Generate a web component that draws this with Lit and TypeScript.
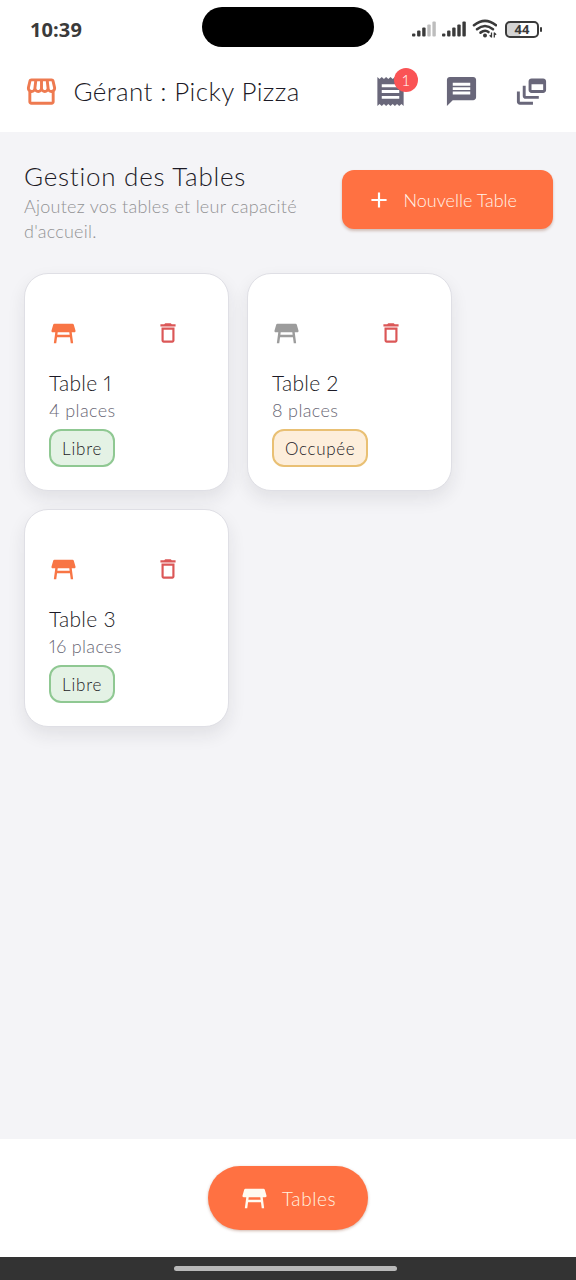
import { LitElement, html, css, svg } from "lit";
import { customElement, property } from "lit/decorators.js";
import { classMap } from "lit/directives/class-map.js";

const ICONS: Record<string, string> = {
  store:
    "M21.9 8.89l-1.05-4.37c-.22-.9-1-1.52-1.91-1.52H5.05c-.9 0-1.69.63-1.9 1.52L2.1 8.89c-.24 1.02-.02 2.06.62 2.88.08.11.19.19.28.29V19c0 1.1.9 2 2 2h14c1.1 0 2-.9 2-2v-6.94c.09-.09.2-.18.28-.28.64-.82.87-1.87.62-2.89zm-2.99-3.9l1.05 4.37c.1.42.01.84-.25 1.17-.14.18-.44.47-.94.47-.61 0-1.14-.49-1.21-1.14L16.98 5l1.93-.01zM13 5h1.96l.54 4.52c.05.39-.07.78-.33 1.07-.22.26-.54.41-.95.41-.67 0-1.22-.59-1.22-1.31V5zM8.49 9.52L9.04 5H11v4.69c0 .72-.55 1.31-1.29 1.31-.34 0-.65-.15-.89-.41-.25-.29-.37-.68-.33-1.07zm-4.45-.16L5.05 5h1.97l-.58 4.86c-.08.65-.6 1.14-1.21 1.14-.49 0-.8-.29-.93-.47-.27-.32-.36-.75-.26-1.17zM5 19v-6.03c.08.01.15.03.23.03.87 0 1.66-.36 2.24-.95.6.6 1.4.95 2.31.95.87 0 1.65-.36 2.23-.93.59.57 1.39.93 2.29.93.84 0 1.64-.35 2.24-.95.58.59 1.37.95 2.24.95.08 0 .15-.02.23-.03V19H5z",
  receipt:
    "M18 17H6v-2h12v2zm0-4H6v-2h12v2zm0-4H6V7h12v2zM3 22l1.5-1.5L6 22l1.5-1.5L9 22l1.5-1.5L12 22l1.5-1.5L15 22l1.5-1.5L18 22l1.5-1.5L21 22V2l-1.5 1.5L18 2l-1.5 1.5L15 2l-1.5 1.5L12 2l-1.5 1.5L9 2 7.5 3.5 6 2 4.5 3.5 3 2v20z",
  message:
    "M20 2H4c-1.1 0-1.99.9-1.99 2L2 22l4-4h14c1.1 0 2-.9 2-2V4c0-1.1-.9-2-2-2zm-2 12H6v-2h12v2zm0-3H6V9h12v2zm0-3H6V6h12v2z",
  feed:
    "M8 8H6v7c0 1.1.9 2 2 2h9v-2H8V8zM20 3h-8c-1.1 0-2 .9-2 2v6c0 1.1.9 2 2 2h8c1.1 0 2-.9 2-2V5c0-1.1-.9-2-2-2zm0 8h-8V7h8v4zM4 12H2v7c0 1.1.9 2 2 2h9v-2H4v-7z",
  trash:
    "M6 19c0 1.1.9 2 2 2h8c1.1 0 2-.9 2-2V7H6v12zM8 9h8v10H8V9zm7.5-5l-1-1h-5l-1 1H5v2h14V4z",
  table:
    "M21.96 9.73l-1.43-5c-.12-.43-.51-.73-.96-.73H4.43c-.45 0-.84.3-.96.73l-1.43 5c-.18.63.3 1.27.96 1.27h2.2L4 20h2l.67-5h10.67l.66 5h2l-1.2-9h2.19c.67 0 1.15-.64.97-1.27zM6.93 13l.27-2h9.6l.27 2H6.93z",
  add: "M19 13h-6v6h-2v-6H5v-2h6V5h2v6h6v2z",
};

interface DiningTable {
  name: string;
  seats: number;
  free: boolean;
}

@customElement("ui-icon")
class UiIcon extends LitElement {
  @property() name = "";
  static styles = css`
    :host {
      display: block;
      flex: none;
      width: 35px;
      height: 35px;
    }
    .glyph {
      display: block;
      width: 100%;
      height: 100%;
      fill: currentColor;
    }
  `;
  render() {
    return html`<svg class="glyph" viewBox="0 0 24 24"><path d=${ICONS[this.name]}></path></svg>`;
  }
}

@customElement("status-bar")
class StatusBar extends LitElement {
  static styles = css`
    :host {
      display: grid;
      grid-template-columns: 1fr 172px 1fr;
      align-items: center;
      height: 53px;
      color: #3a3a3a;
    }
    .time {
      padding: 6px 0 0 30px;
      font: 700 20px/24px "Open Sans", sans-serif;
      letter-spacing: 0.1px;
    }
    .island {
      height: 40px;
      border-radius: 20px;
      background: #000;
    }
    .system {
      display: flex;
      align-items: center;
      padding: 5px 0 0 38px;
    }
    .signals {
      display: block;
      flex: none;
    }
    .battery {
      display: flex;
      align-items: center;
      margin-left: 8px;
    }
    .cell {
      box-sizing: border-box;
      width: 34px;
      height: 17px;
      border: 2px solid #3a3a3a;
      border-radius: 5px;
      background: linear-gradient(90deg, #d4d4d4 44%, #fff 44%);
      font: 700 13px/13px "Open Sans", sans-serif;
      text-align: center;
    }
    .tip {
      width: 2px;
      height: 5px;
      margin-left: 1px;
      border-radius: 1px;
      background: #3a3a3a;
    }
  `;
  bars(x: number, lit: number) {
    return [3, 6, 9, 12, 15].map(
      (h, i) => svg`<rect x=${x + i * 5.1} y=${17.5 - h} width="3.4" height=${h} rx="1" fill=${i < lit ? "#3a3a3a" : "#bdbdbd"}></rect>`,
    );
  }
  render() {
    return html`
      <div class="time">10:39</div>
      <div class="island"></div>
      <div class="system">
        <svg class="signals" width="85" height="20" viewBox="0 0 85 20">
          ${this.bars(0, 3)} ${this.bars(30, 5)}
          <g fill="none" stroke="#3a3a3a" stroke-width="2.6" stroke-linecap="round">
            <path d="M62 6.2 Q73 -2.6 84 6.2"></path>
            <path d="M65 10.2 Q73 3.8 81 10.2"></path>
            <path d="M68.5 13.6 Q73 10.2 76.5 13"></path>
          </g>
          <circle cx="73" cy="16.4" r="2" fill="#3a3a3a"></circle>
          <path d="M79.5 13.5v5M79.7 18.3l-2-2M82.3 18.5v-5M82.1 13.7l2 2" stroke="#3a3a3a" stroke-width="1.3" fill="none"></path>
        </svg>
        <div class="battery"><div class="cell">44</div><div class="tip"></div></div>
      </div>
    `;
  }
}

@customElement("table-card")
class TableCard extends LitElement {
  @property({ attribute: false }) table!: DiningTable;
  static styles = css`
    :host {
      display: flex;
      flex-direction: column;
      align-items: flex-start;
      box-sizing: border-box;
      height: 218px;
      padding: 44.5px 24px 0;
      border: 1.5px solid #dfdfe5;
      border-radius: 24px;
      background: #fff;
      box-shadow: 0 8px 18px rgba(30, 30, 40, 0.09);
      font-variant-numeric: proportional-nums;
    }
    .top {
      display: flex;
      justify-content: space-between;
      align-items: center;
      width: 132px;
      height: 29px;
    }
    .stand {
      width: 29px;
      height: 29px;
      margin-left: -0.5px;
      color: #f87545;
    }
    .busy {
      color: #9c9c9c;
    }
    .remove {
      width: 26px;
      height: 26px;
      color: #db5757;
    }
    .name {
      margin-top: 21.5px;
      font-size: 21px;
      line-height: 28px;
      letter-spacing: 0.3px;
      color: #1c1a26;
    }
    .seats {
      font-size: 18px;
      line-height: 26px;
      letter-spacing: 0.35px;
      color: #686674;
    }
    .state {
      box-sizing: border-box;
      height: 38px;
      margin-top: 6px;
      padding: 0 11px;
      border: 2px solid #8fc892;
      border-radius: 12px;
      background: #e4f2e5;
      font-size: 17px;
      line-height: 35px;
      letter-spacing: 0.8px;
      color: #1c1a26;
    }
    .taken {
      border-color: #e9c074;
      background: #fdeedb;
      letter-spacing: 0.65px;
    }
  `;
  render() {
    const { name, seats, free } = this.table;
    return html`
      <div class="top">
        <ui-icon class=${classMap({ stand: true, busy: !free })} name="table"></ui-icon>
        <ui-icon class="remove" name="trash"></ui-icon>
      </div>
      <div class="name">${name}</div>
      <div class="seats">${seats} places</div>
      <div class=${classMap({ state: true, taken: !free })}>${free ? "Libre" : "Occupée"}</div>
    `;
  }
}

@customElement("app-root")
class AppRoot extends LitElement {
  tables: DiningTable[] = [
    { name: "Table 1", seats: 4, free: true },
    { name: "Table 2", seats: 8, free: false },
    { name: "Table 3", seats: 16, free: true },
  ];
  static styles = css`
    :host {
      display: flex;
      flex-direction: column;
      height: 1280px;
      background: #fff;
      font-family: Lato, sans-serif;
      font-weight: 300;
    }
    .header {
      display: flex;
      align-items: center;
      box-sizing: border-box;
      height: 79px;
      padding: 0 27px 3px 24px;
      color: #69677a;
    }
    .store {
      color: #ee7a50;
    }
    .title {
      flex: 1;
      margin-left: 14.5px;
      font-size: 26px;
      line-height: 34px;
      letter-spacing: 0.38px;
      white-space: nowrap;
      color: #1c1a26;
    }
    .actions {
      display: flex;
      gap: 35.3px;
    }
    .orders {
      position: relative;
    }
    .badge {
      position: absolute;
      top: -6px;
      right: -9.5px;
      width: 24px;
      height: 24px;
      border-radius: 50%;
      background: #fa5355;
      font-size: 15px;
      line-height: 24px;
      text-align: center;
      color: #fff;
    }
    .body {
      flex: 1;
      padding: 26px 23px 0 24px;
      background: #f4f4f7;
    }
    .intro {
      display: flex;
      align-items: center;
      justify-content: space-between;
      height: 86px;
    }
    .heading {
      font-size: 26px;
      line-height: 34px;
      letter-spacing: 0.75px;
      color: #1c1a26;
    }
    .hint {
      width: 300px;
      margin: 1px 0 -1px;
      font-size: 18px;
      line-height: 25px;
      letter-spacing: 0.25px;
      color: #929294;
    }
    .create {
      display: flex;
      align-items: center;
      box-sizing: border-box;
      width: 211px;
      height: 59px;
      margin-bottom: 3px;
      padding-left: 23.5px;
      border-radius: 12px;
      background: #ff7142;
      box-shadow: 0 2px 3px rgba(120, 50, 20, 0.28);
      font-size: 18px;
      white-space: nowrap;
      color: #fff3e8;
    }
    .plus {
      width: 26px;
      height: 26px;
      margin-right: 12px;
      color: #fff;
    }
    .grid {
      display: grid;
      grid-template-columns: 204.5px 204.5px;
      gap: 18px 18.5px;
      margin-top: 29px;
    }
    .nav {
      display: flex;
      align-items: center;
      justify-content: center;
      height: 118px;
    }
    .tab {
      display: flex;
      align-items: center;
      box-sizing: border-box;
      width: 160px;
      height: 64px;
      padding-left: 32px;
      border-radius: 32px;
      background: #ff7142;
      box-shadow: 0 1px 3px rgba(120, 50, 20, 0.35);
      font-size: 19px;
      letter-spacing: 0.6px;
      color: #fff3e0;
    }
    .tab-icon {
      width: 29px;
      height: 29px;
      margin-right: 13px;
      color: #fffaf0;
    }
    .gesture {
      display: flex;
      align-items: center;
      justify-content: center;
      box-sizing: border-box;
      height: 23px;
      padding-right: 5px;
      background: #333;
    }
    .handle {
      width: 223px;
      height: 5px;
      border-radius: 3px;
      background: #b9b9b9;
    }
  `;
  render() {
    return html`
      <status-bar></status-bar>
      <header class="header">
        <ui-icon class="store" name="store"></ui-icon>
        <div class="title">Gérant : Picky Pizza</div>
        <div class="actions">
          <div class="orders"><ui-icon name="receipt"></ui-icon><span class="badge">1</span></div>
          <ui-icon name="message"></ui-icon>
          <ui-icon name="feed"></ui-icon>
        </div>
      </header>
      <main class="body">
        <div class="intro">
          <div>
            <div class="heading">Gestion des Tables</div>
            <div class="hint">Ajoutez vos tables et leur capacité d'accueil.</div>
          </div>
          <div class="create"><ui-icon class="plus" name="add"></ui-icon>Nouvelle Table</div>
        </div>
        <div class="grid">${this.tables.map((t) => html`<table-card .table=${t}></table-card>`)}</div>
      </main>
      <nav class="nav">
        <div class="tab"><ui-icon class="tab-icon" name="table"></ui-icon>Tables</div>
      </nav>
      <div class="gesture"><div class="handle"></div></div>
    `;
  }
}
